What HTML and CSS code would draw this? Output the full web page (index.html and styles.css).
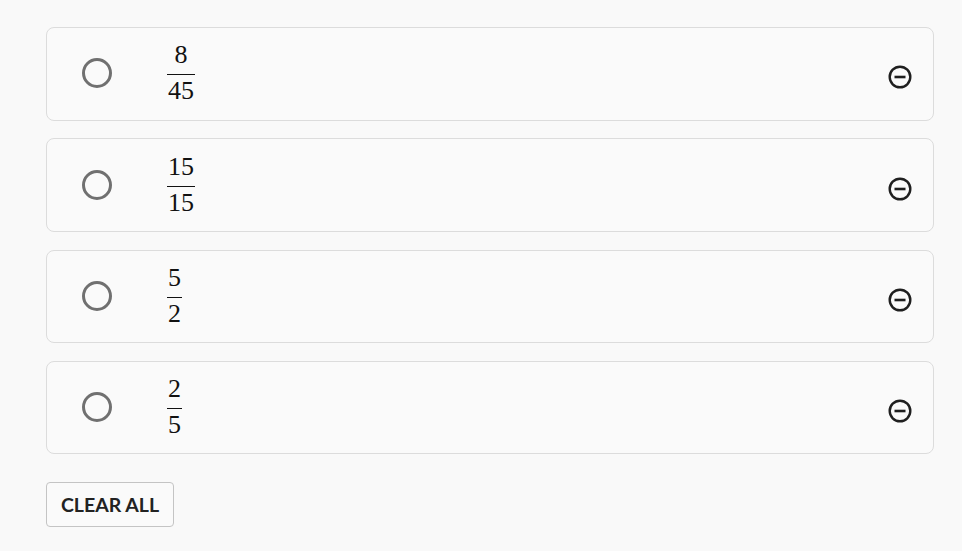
FILE: index.html
```html
<!DOCTYPE html>
<html>
<head>
<meta charset="utf-8">
<link rel="stylesheet" href="styles.css">
</head>
<body>
<div class="list">
  <div class="card">
    <span class="radio"></span>
    <span class="frac"><span class="num">8</span><span class="den">45</span></span>
    <svg class="minus" viewBox="0 0 24 24" width="24" height="24"><circle cx="12" cy="12" r="10.3" fill="none" stroke="#1f1f1f" stroke-width="2.4"/><line x1="6.5" y1="12" x2="17.5" y2="12" stroke="#1f1f1f" stroke-width="2.6"/></svg>
  </div>
  <div class="card">
    <span class="radio"></span>
    <span class="frac"><span class="num">15</span><span class="den">15</span></span>
    <svg class="minus" viewBox="0 0 24 24" width="24" height="24"><circle cx="12" cy="12" r="10.3" fill="none" stroke="#1f1f1f" stroke-width="2.4"/><line x1="6.5" y1="12" x2="17.5" y2="12" stroke="#1f1f1f" stroke-width="2.6"/></svg>
  </div>
  <div class="card">
    <span class="radio"></span>
    <span class="frac"><span class="num">5</span><span class="den">2</span></span>
    <svg class="minus" viewBox="0 0 24 24" width="24" height="24"><circle cx="12" cy="12" r="10.3" fill="none" stroke="#1f1f1f" stroke-width="2.4"/><line x1="6.5" y1="12" x2="17.5" y2="12" stroke="#1f1f1f" stroke-width="2.6"/></svg>
  </div>
  <div class="card">
    <span class="radio"></span>
    <span class="frac"><span class="num">2</span><span class="den">5</span></span>
    <svg class="minus" viewBox="0 0 24 24" width="24" height="24"><circle cx="12" cy="12" r="10.3" fill="none" stroke="#1f1f1f" stroke-width="2.4"/><line x1="6.5" y1="12" x2="17.5" y2="12" stroke="#1f1f1f" stroke-width="2.6"/></svg>
  </div>
</div>
<button class="clear">CLEAR ALL</button>
</body>
</html>
```
FILE: styles.css
```css
html, body {
  margin: 0;
  background: #f9f9f9;
}
body {
  padding: 27px 28px 0 46px;
  font-family: Lato, "Liberation Sans", sans-serif;
}
.list {
  display: flex;
  flex-direction: column;
  gap: 17.7px;
}
.card {
  display: flex;
  align-items: center;
  height: 91.6px;
  border: 1px solid #dcdcdc;
  border-radius: 8px;
  background: #fafafa;
  padding: 0 21px 0 35px;
}
.radio {
  width: 24px;
  height: 24px;
  border: 3px solid #707070;
  border-radius: 50%;
  flex: none;
  margin-top: -1px;
}
.frac {
  display: inline-flex;
  flex-direction: column;
  align-items: center;
  margin-left: 55px;
  font-family: "Liberation Serif", serif;
  font-size: 26px;
  color: #111;
  line-height: 1;
  margin-top: -1px;
}
.num {
  padding: 0 1px 6px;
}
.den {
  border-top: 1.3px solid #111;
  padding: 3px 1px 0;
}
.minus {
  margin-left: auto;
  margin-top: 7px;
}
.clear {
  display: block;
  margin-top: 27.5px;
  height: 45px;
  width: 128px;
  border: 1px solid #c4c4c4;
  border-radius: 4px;
  background: #fafafa;
  font-family: Lato, sans-serif;
  font-weight: 700;
  font-size: 19.5px;
  color: #222;
  padding: 0;
}
```
